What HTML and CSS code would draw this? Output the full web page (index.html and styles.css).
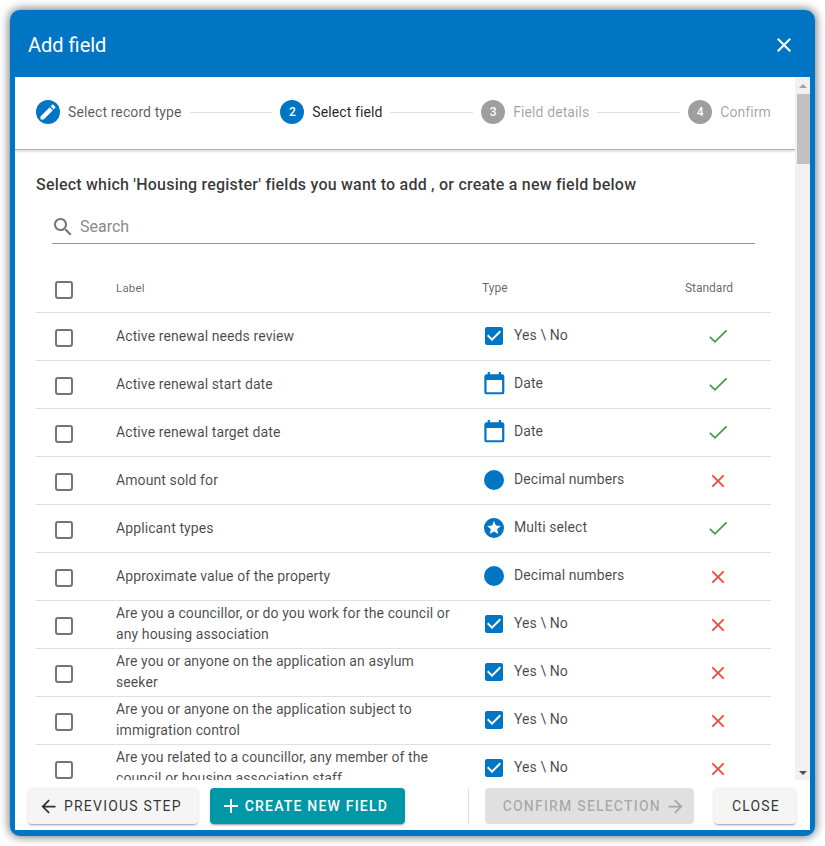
FILE: index.html
```html
<!DOCTYPE html>
<html lang="en">
<head>
<meta charset="utf-8">
<title>Add field</title>
<link rel="stylesheet" href="styles.css">
</head>
<body>
<svg class="defs" aria-hidden="true">
  <symbol id="i-check" viewBox="0 0 24 24"><path d="M19 3H5c-1.11 0-2 .9-2 2v14c0 1.1.89 2 2 2h14c1.11 0 2-.9 2-2V5c0-1.1-.89-2-2-2zm-9 14l-5-5 1.41-1.41L10 14.17l7.59-7.59L19 8l-9 9z"/></symbol>
  <symbol id="i-date" viewBox="0 0 24 24"><path d="M19 19H5V8H19M16 1V3H8V1H6V3H5C3.89 3 3 3.89 3 5V19A2 2 0 0 0 5 21H19A2 2 0 0 0 21 19V5C21 3.89 20.1 3 19 3H18V1"/></symbol>
  <symbol id="i-circle" viewBox="0 0 24 24"><circle cx="12" cy="12" r="10"/></symbol>
  <symbol id="i-star" viewBox="0 0 24 24"><path d="M16.23 18L12 15.45 7.77 18l1.12-4.81-3.73-3.23 4.92-.42L12 5l1.92 4.53 4.92.42-3.73 3.23L16.23 18M12 2C6.47 2 2 6.5 2 12a10 10 0 0 0 20 0c0-5.53-4.5-10-10-10z"/></symbol>
  <symbol id="i-yes" viewBox="0 0 24 24"><path d="M3.9 11.8l5 5L20.6 5.4" fill="none" stroke="#43a047" stroke-width="1.8"/></symbol>
  <symbol id="i-no" viewBox="0 0 24 24"><path d="M6.3 6.3l11.4 11.4M17.7 6.3L6.3 17.7" fill="none" stroke="#f44336" stroke-width="1.7"/></symbol>
</svg>
<div class="dialog">
  <header class="title-bar">
    <h1 class="title">Add field</h1>
    <svg class="close-icon" viewBox="0 0 24 24"><path d="M19 6.41L17.59 5 12 10.59 6.41 5 5 6.41 10.59 12 5 17.59 6.41 19 12 13.41 17.59 19 19 17.59 13.41 12z"/></svg>
  </header>
  <div class="main">
    <div class="content">
      <nav class="stepper">
        <span class="step-dot dot-active"><svg class="pencil" viewBox="0 0 24 24"><path d="M3 17.25V21h3.75L17.81 9.94l-3.75-3.75L3 17.25zM20.71 7.04c.39-.39.39-1.02 0-1.41l-2.34-2.34c-.39-.39-1.02-.39-1.41 0l-1.83 1.83 3.75 3.75 1.83-1.83z"/></svg></span>
        <span class="step-label label-done">Select record type</span>
        <span class="step-line"></span>
        <span class="step-dot dot-active">2</span>
        <span class="step-label label-active">Select field</span>
        <span class="step-line"></span>
        <span class="step-dot dot-off">3</span>
        <span class="step-label label-off">Field details</span>
        <span class="step-line"></span>
        <span class="step-dot dot-off">4</span>
        <span class="step-label label-off">Confirm</span>
      </nav>
      <div class="panel">
        <p class="lead">Select which 'Housing register' fields you want to add , or create a new field below</p>
        <div class="search">
          <svg class="search-icon" viewBox="0 0 24 24"><path d="M15.5 14h-.79l-.28-.27C15.41 12.59 16 11.11 16 9.5 16 5.91 13.09 3 9.5 3S3 5.91 3 9.5 5.91 16 9.5 16c1.61 0 3.09-.59 4.23-1.57l.27.28v.79l5 4.99L20.49 19l-4.99-5zm-6 0C7.01 14 5 11.99 5 9.5S7.01 5 9.5 5 14 7.01 14 9.5 11.99 14 9.5 14z"/></svg>
          <span class="search-text">Search</span>
        </div>
        <div class="row head">
          <span class="box"></span>
          <span class="h-label">Label</span>
          <span class="h-type">Type</span>
          <span class="h-std">Standard</span>
        </div>
        <div class="row"><span class="box"></span><span class="label">Active renewal needs review</span><span class="type"><svg class="t-icon"><use href="#i-check"/></svg><span class="type-name">Yes \ No</span></span><svg class="std"><use href="#i-yes"/></svg></div>
        <div class="row"><span class="box"></span><span class="label">Active renewal start date</span><span class="type"><svg class="t-icon cal"><use href="#i-date"/></svg><span class="type-name">Date</span></span><svg class="std"><use href="#i-yes"/></svg></div>
        <div class="row"><span class="box"></span><span class="label">Active renewal target date</span><span class="type"><svg class="t-icon cal"><use href="#i-date"/></svg><span class="type-name">Date</span></span><svg class="std"><use href="#i-yes"/></svg></div>
        <div class="row"><span class="box"></span><span class="label">Amount sold for</span><span class="type"><svg class="t-icon"><use href="#i-circle"/></svg><span class="type-name">Decimal numbers</span></span><svg class="std"><use href="#i-no"/></svg></div>
        <div class="row"><span class="box"></span><span class="label">Applicant types</span><span class="type"><svg class="t-icon"><use href="#i-star"/></svg><span class="type-name">Multi select</span></span><svg class="std"><use href="#i-yes"/></svg></div>
        <div class="row"><span class="box"></span><span class="label">Approximate value of the property</span><span class="type"><svg class="t-icon"><use href="#i-circle"/></svg><span class="type-name">Decimal numbers</span></span><svg class="std"><use href="#i-no"/></svg></div>
        <div class="row"><span class="box"></span><span class="label wrapped">Are you a councillor, or do you work for the council or any housing association</span><span class="type"><svg class="t-icon"><use href="#i-check"/></svg><span class="type-name">Yes \ No</span></span><svg class="std"><use href="#i-no"/></svg></div>
        <div class="row"><span class="box"></span><span class="label wrapped">Are you or anyone on the application an asylum seeker</span><span class="type"><svg class="t-icon"><use href="#i-check"/></svg><span class="type-name">Yes \ No</span></span><svg class="std"><use href="#i-no"/></svg></div>
        <div class="row"><span class="box"></span><span class="label wrapped">Are you or anyone on the application subject to immigration control</span><span class="type"><svg class="t-icon"><use href="#i-check"/></svg><span class="type-name">Yes \ No</span></span><svg class="std"><use href="#i-no"/></svg></div>
        <div class="row"><span class="box"></span><span class="label wrapped">Are you related to a councillor, any member of the council or housing association staff</span><span class="type"><svg class="t-icon"><use href="#i-check"/></svg><span class="type-name">Yes \ No</span></span><svg class="std"><use href="#i-no"/></svg></div>
      </div>
    </div>
    <div class="scrollbar">
      <span class="arrow-up"></span>
      <span class="thumb"></span>
      <span class="arrow-down"></span>
    </div>
  </div>
  <footer class="actions">
    <button class="btn btn-light btn-prev"><svg class="btn-icon" viewBox="0 0 24 24"><path d="M20 11H7.83l5.59-5.59L12 4l-8 8 8 8 1.41-1.41L7.83 13H20v-2z"/></svg>PREVIOUS STEP</button>
    <button class="btn btn-teal"><svg class="btn-icon" viewBox="0 0 24 24"><path d="M19 13h-6v6h-2v-6H5v-2h6V5h2v6h6v2z"/></svg>CREATE NEW FIELD</button>
    <span class="spacer"></span>
    <span class="divider"></span>
    <button class="btn btn-off">CONFIRM SELECTION<svg class="btn-icon after" viewBox="0 0 24 24"><path d="M12 4l-1.41 1.41L16.17 11H4v2h12.17l-5.58 5.59L12 20l8-8z"/></svg></button>
    <button class="btn btn-light btn-close">CLOSE</button>
  </footer>
</div>
</body>
</html>
```

FILE: styles.css
```css
* { box-sizing: border-box; }
html, body { margin: 0; padding: 0; background: #fff; }
body { padding: 10px; height: 846px; overflow: hidden; font-family: Roboto, sans-serif; }
.defs { display: none; }

.dialog {
  width: 805px;
  height: 826px;
  display: flex;
  flex-direction: column;
  background: #0075c4;
  border-radius: 10px;
  padding: 0 5px 6px;
  box-shadow: 0 0 10px 1px rgba(0, 0, 0, .55);
  overflow: hidden;
}
.title-bar {
  height: 67px;
  flex: none;
  display: flex;
  align-items: center;
  justify-content: space-between;
  padding: 3px 14px 0 13px;
}
.title { margin: 0; font-size: 20px; font-weight: 400; color: #fff; }
.close-icon { width: 24px; height: 24px; fill: #fff; }

.main { flex: 1; min-height: 0; display: flex; background: #fff; }
.content { flex: 1; min-width: 0; overflow: hidden; }

.stepper {
  height: 73px;
  display: flex;
  align-items: center;
  padding: 0 24px 2px 21px;
  border-bottom: 1px solid #b0b0b0;
  box-shadow: 0 2px 2px rgba(0, 0, 0, .12);
}
.step-dot {
  width: 24px;
  height: 24px;
  flex: none;
  border-radius: 50%;
  display: flex;
  align-items: center;
  justify-content: center;
  color: #fff;
  font-size: 12px;
  font-weight: 500;
}
.dot-active { background: #0075c4; }
.dot-off { background: #9e9e9e; }
.pencil { width: 20px; height: 20px; fill: #fff; }
.step-label { margin-left: 8px; font-size: 14px; letter-spacing: .1px; white-space: nowrap; }
.label-done { color: rgba(0, 0, 0, .66); }
.label-active { color: rgba(0, 0, 0, .87); }
.label-off { color: rgba(0, 0, 0, .38); }
.step-line { flex: 1; height: 1px; margin: 0 8px; background: #e0e0e0; }

.panel { padding: 0 24px 0 21px; }
.lead {
  margin: 0;
  padding-top: 25px;
  font-size: 16px;
  line-height: 20px;
  font-weight: 500;
  letter-spacing: .21px;
  color: rgba(0, 0, 0, .78);
  white-space: nowrap;
}
.search {
  margin: 17px 16px 0;
  height: 32px;
  display: flex;
  align-items: center;
  border-bottom: 1px solid #949494;
  padding-bottom: 2px;
}
.search-icon { width: 24px; height: 24px; fill: #757575; margin-left: -1px; }
.search-text { margin-left: 5px; font-size: 16px; color: #8a8a8a; }

.row {
  display: grid;
  grid-template-columns: 80px 340px 25px 184px 106px;
  height: 48px;
  align-items: center;
  border-bottom: 1px solid #e0e0e0;
}
.row > :nth-child(1) { grid-column: 1; }
.row > :nth-child(2) { grid-column: 2; }
.row > :nth-child(3) { grid-column: 4; }
.row > :nth-child(4) { grid-column: 5; }
.head { height: 69px; padding-top: 22px; }
.box {
  width: 18px;
  height: 18px;
  margin: 2px 0 0 19px;
  border: 2px solid #757575;
  border-radius: 3px;
}
.h-label, .h-type, .h-std { font-size: 12px; color: rgba(0, 0, 0, .62); margin-top: -3px; }
.h-label { font-size: 11.5px; letter-spacing: .2px; }
.h-type { margin-left: 1px; }
.h-std { justify-self: center; margin-right: 18px; }
.label { font-size: 14px; line-height: 21px; letter-spacing: .1px; color: rgba(0, 0, 0, .72); }
.wrapped { margin-top: -2px; }
.type { display: flex; align-items: center; height: 24px; margin-top: -2px; }
.t-icon { width: 24px; height: 24px; flex: none; fill: #0075c4; margin-left: 1px; }
.cal { width: 26.7px; height: 26.7px; margin: 2px -1.35px 0 -.35px; }
.type-name { margin: -2px 0 0 8px; font-size: 14px; letter-spacing: .08px; color: rgba(0, 0, 0, .72); }
.std { width: 24px; height: 24px; justify-self: center; margin-top: 1px; }

.scrollbar {
  width: 15px;
  flex: none;
  background: #f1f1f1;
  display: flex;
  flex-direction: column;
  align-items: flex-end;
}
.thumb { width: 13px; height: 70px; background: #c1c1c1; }
.arrow-up, .arrow-down { width: 0; height: 0; border: 4px solid transparent; align-self: center; }
.arrow-up { border-bottom-color: #a3a3a3; border-top-width: 0; margin: 7px 0 6px; }
.arrow-down { border-top-color: #505050; border-bottom-width: 0; margin-top: auto; margin-bottom: 5px; }

.actions {
  height: 50px;
  flex: none;
  display: flex;
  align-items: flex-start;
  background: #fff;
  padding: 8px 14px 0 13px;
}
.btn {
  height: 36px;
  display: flex;
  align-items: center;
  border: 0;
  border-radius: 4px;
  padding: 0 16px;
  font-family: Roboto, sans-serif;
  font-size: 14px;
  letter-spacing: 1.2px;
  white-space: nowrap;
}
.btn-light {
  background: #f5f5f5;
  color: rgba(0, 0, 0, .8);
  box-shadow: 0 2px 2px -1px rgba(0, 0, 0, .3), 0 1px 3px rgba(0, 0, 0, .14);
}
.btn-prev { padding: 0 16px 0 10px; }
.btn-teal {
  margin-left: 12px;
  background: #0097a7;
  color: #fff;
  font-weight: 500;
  padding: 0 17px 0 9px;
  box-shadow: 0 2px 2px -1px rgba(0, 0, 0, .3), 0 1px 3px rgba(0, 0, 0, .14);
}
.btn-off { background: #e0e0e0; color: rgba(0, 0, 0, .26); font-weight: 500; padding: 0 8px 0 18px; }
.btn-close { margin-left: 20px; padding: 0 16px 0 18px; }
.btn-icon { width: 21px; height: 21px; fill: currentColor; margin-right: 5px; }
.btn-teal .btn-icon { width: 24px; height: 24px; margin-right: 2px; }
.after { margin: 0 0 0 4px; }
.spacer { flex: 1; }
.divider { width: 1px; height: 36px; background: #e0e0e0; margin-right: 16px; }
```
